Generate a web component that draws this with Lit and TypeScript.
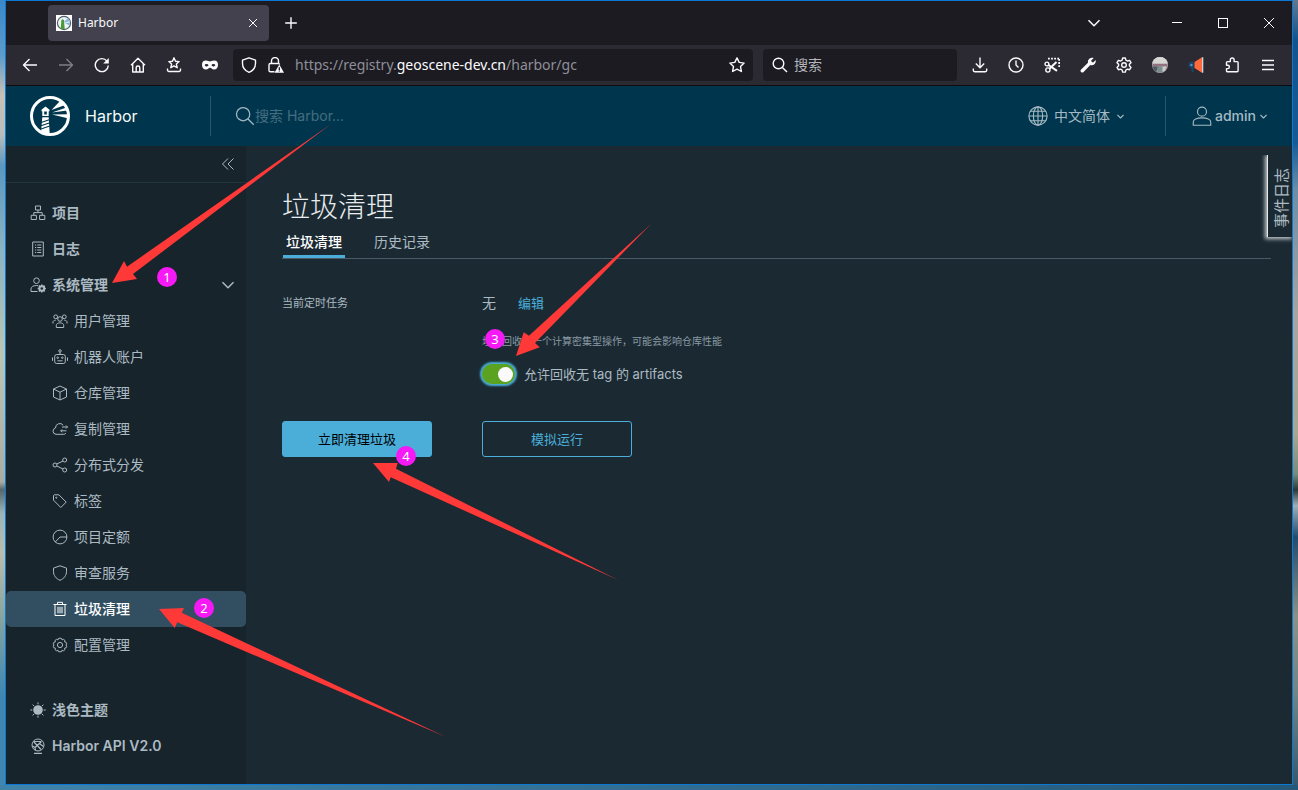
import { LitElement, html, css, svg, TemplateResult } from "lit";
import { customElement, property, state } from "lit/decorators.js";
import { classMap } from "lit/directives/class-map.js";

/* ---------- icon set ---------- */

const paths: Record<string, TemplateResult> = {
  back: svg`<path d="M15 8H1.5M7.5 2 1.5 8l6 6"/>`,
  forward: svg`<path d="M1 8h13.5M8.5 2l6 6-6 6"/>`,
  reload: svg`<path d="M14.3 8.5A6.5 6.5 0 1 1 13 4.2"/><path d="M14.8 1v5.600H9.200z" fill="currentColor" stroke="none"/>`,
  home: svg`<path d="M1 8.2 8 1.2l7 7M2.7 7v8h10.6V7M6.2 15v-4.2a1.8 1.8 0 0 1 3.6 0V15"/>`,
  starTray: svg`<path d="M8 .8l1.5 3.4 3.6.4-2.7 2.5.8 3.6L8 8.9l-3.2 1.8.8-3.6-2.7-2.5 3.6-.4zM1.5 11.5v1.6a1.4 1.4 0 0 0 1.4 1.4h10.2a1.4 1.4 0 0 0 1.4-1.4v-1.6"/>`,
  mask: svg`<path fill="currentColor" stroke="none" fill-rule="evenodd" d="M4 3.6c1.800 0 3 .8 4 .8s2.200-.8 4-.8c2.800 0 4 1.500 4 4.200 0 2.900-1.500 4.700-4 4.700-2.100 0-2.900-1.700-4-1.700s-1.900 1.700-4 1.700c-2.500 0-4-1.800-4-4.700C0 5.100 1.200 3.600 4 3.600zM2.600 8.200c.6.900 1.300 1.200 2.100 1.200s1.500-.4 1.900-1.100c-.5-.9-1.100-1.300-2-1.300s-1.600.5-2 1.200zm6.800.1c.4.700 1.100 1.100 1.900 1.100s1.500-.3 2.100-1.200c-.4-.7-1.100-1.200-2-1.200s-1.500.4-2 1.300z"/>`,
  shield: svg`<path d="M8 .8l6.500 2.300v3.400c0 4-2.500 7.200-6.500 8.800C4 13.700 1.500 10.500 1.500 6.500V3.100z"/>`,
  lock: svg`<path d="M3.500 6.500V4a3.500 3.500 0 0 1 7 0v2.500M6.500 14.800H2.400A1.400 1.400 0 0 1 1 13.400V7.900a1.400 1.400 0 0 1 1.400-1.400h8a1.400 1.400 0 0 1 1.300 1"/><path d="M11.300 7.600 16 15.700H6.500z" fill="currentColor" stroke="none"/><path d="M11.300 10.300v2.600M11.300 13.600v1" stroke="#1c1b22" stroke-width="1.300"/>`,
  star: svg`<path d="M8 .9l2.200 4.500 4.900.7-3.600 3.500.9 4.900L8 12.200l-4.400 2.300.9-4.900L.9 6.100l4.900-.7z"/>`,
  search: svg`<circle cx="6.500" cy="6.500" r="5.300"/><path d="M10.400 10.400 15 15"/>`,
  download: svg`<path d="M8 .5v10M3.800 6.500 8 10.700l4.200-4.200M1.300 11.500v1.800a1.400 1.400 0 0 0 1.400 1.400h10.600a1.400 1.400 0 0 0 1.400-1.400v-1.800"/>`,
  history: svg`<circle cx="8" cy="8" r="7"/><path d="M8 3.500V8l2.500 2.500"/>`,
  scissors: svg`<path d="M4 1.700h12M15.200 2v9" stroke-width="1.800" stroke-dasharray="1.800 1.300"/><circle cx="2.900" cy="7" r="1.900"/><circle cx="3.900" cy="13" r="2.100"/><path d="M4.500 8 13 13.800M5.700 11.500 12.500 5" stroke-width="2"/>`,
  wrench: svg`<path fill="currentColor" stroke="none" d="M10.900.9c1-.3 2-.2 2.800.1l-2.500 2.500.5 1.400 1.500.5 2.400-2.400c.4 1.500 0 3-1 4-1.200 1.200-2.800 1.500-4.300 1L3.600 14.900a1.700 1.700 0 0 1-2.500-2.500L8 5.700C7.500 3.700 8.700 1.500 10.900.9z"/>`,
  gear: svg`<path d="M8 .9l1.300.1.600 2.100 1.500.9 2.200-.6 1.400 2.300-1.600 1.600v1.500l1.600 1.600-1.400 2.300-2.200-.6-1.500.9-.6 2.100H6.700l-.6-2.100-1.500-.9-2.200.6L1 10.400l1.600-1.600V7.300L1 5.700l1.400-2.300 2.200.6 1.500-.9L6.700 1z"/><circle cx="8" cy="8" r="2.300"/>`,
  avatar: svg`<g stroke="none"><circle cx="8" cy="8" r="8" fill="#a9a3a6"/><path d="M.8 4.500A8 8 0 0 1 15.200 4.500L15.800 6.500H.2z" fill="#d8d6d4"/><path d="M1 7h14v2.500H1z" fill="#93717f"/><path d="M4 9.500h8l-1 6H6z" fill="#778f8d"/><path d="M.5 9.500h5l-1 5.500A8 8 0 0 1 .5 9.500z" fill="#505b66"/><path d="M10.500 9.500h4l-2 4.500-2 .8z" fill="#d3c7cb"/></g>`,
  horn: svg`<g stroke="none"><path d="M6.500 5 14 .3v15.400L6.500 11z" fill="#ff6a3d"/><path d="M14 .3h1.300v15.400H14z" fill="#c9d3e0"/><path d="M3 4.600h3v6.800h-.5l.4 3.800H3.900l-.9-4A3.400 3.400 0 0 1 3 4.600z" fill="#1c4266"/><path d="M.6 6.500 3 5v6L.6 9.500z" fill="#1c4266"/><circle cx="3.400" cy="8" r="1.200" fill="#6595b5"/></g>`,
  puzzle: svg`<path d="M2.500 8.200V5.600a1 1 0 0 1 1-1h2.800V2.900a1.900 1.900 0 0 1 3.800 0v1.700h3a1 1 0 0 1 1 1v8.200a1 1 0 0 1-1 1H3.500a1 1 0 0 1-1-1v-2.200h1.200a1.700 1.700 0 0 0 0-3.400z"/>`,
  menu: svg`<path d="M2 3.500h12M2 8h12M2 12.500h12"/>`,
  plus: svg`<path d="M8 2.200v11.600M2.200 8h11.600" stroke-width="1.400"/>`,
  close: svg`<path d="M4 4l8 8M12 4l-8 8"/>`,
  winClose: svg`<path d="M3 3l10 10M13 3 3 13"/>`,
  winMin: svg`<path d="M3 7.500h10"/>`,
  winMax: svg`<path d="M3.500 3.500h9v9h-9z"/>`,
  chevron: svg`<path d="M2.500 5.200 8 10.700l5.500-5.500" stroke-width="var(--chevron-stroke, 1.5)"/>`,
  collapse: svg`<path d="M8 2.500 2.500 8 8 13.500M13.500 2.500 8 8l5.500 5.500"/>`,
  globe: svg`<circle cx="8" cy="8" r="7.300"/><ellipse cx="8" cy="8" rx="3.700" ry="7.300"/><path d="M8 .7v14.600M.7 8h14.600M1.800 4.200h12.400M1.800 11.800h12.400"/>`,
  user: svg`<circle cx="8" cy="4.500" r="3.600"/><path d="M1 15.400v-2.500c0-2 3-3.400 7-3.400s7 1.400 7 3.400v2.500z"/>`,
  org: svg`<path d="M5.500 1h5v4h-5zM1.200 10.300h5.200v4.200H1.200zM9.600 10.300h5.200v4.200H9.600zM8 5v2.600M3.800 10.300V7.600h8.400v2.700"/>`,
  list: svg`<path d="M2.700 1h10.600v14H2.700z"/><path d="M5 4h1.200M7.300 4h4M5 6.500h1.200M7.300 6.500h4M5 9h1.200M7.300 9h4M5 11.500h1.200M7.300 11.500h4" stroke-width="1.200"/>`,
  admin: svg`<circle cx="6.500" cy="3.700" r="2.800"/><path d="M7.500 14.500H1v-2.600c0-2 2.200-3.400 5.500-3.400.6 0 1.100 0 1.600.1"/><circle cx="11.800" cy="11.500" r="2.300" stroke-width="2"/><path d="M11.800 7.400v1.800M11.800 13.800v1.800M7.700 11.500h1.800M14.100 11.500h1.800M8.900 8.600l1.300 1.300M13.400 13.100l1.300 1.300M14.700 8.600l-1.300 1.300M10.200 13.100l-1.300 1.300" stroke-width="1.500"/>`,
  users: svg`<circle cx="8" cy="6" r="2.300"/><circle cx="3.700" cy="3.800" r="1.900"/><circle cx="12.300" cy="3.800" r="1.900"/><path d="M4.300 14.500v-2.200c0-1.500 1.500-2.400 3.700-2.400s3.700.9 3.700 2.400v2.200zM1 10.500V9c0-1 .9-1.700 2.700-1.800M15 10.500V9c0-1-.9-1.700-2.700-1.800"/>`,
  robot: svg`<rect x="2.700" y="5.500" width="10.600" height="9" rx="2"/><path d="M8 5.500V3M.5 8.500v3.300M15.500 8.500v3.300M5.500 11.800h5"/><circle cx="8" cy="1.900" r="1.200"/><circle cx="5.700" cy="8.700" r=".8"/><circle cx="10.300" cy="8.700" r=".8"/>`,
  cube: svg`<path d="M8 1l6.500 3v8L8 15l-6.500-3V4zM1.500 4 8 7.200 14.500 4M8 7.200V15"/>`,
  cloud: svg`<path d="M13.800 12.300c-.5.700-1.200 1-2 1H4a3.200 3.200 0 0 1-.5-6.300 4.300 4.300 0 0 1 7.700-2.800M10 6h5.500M14 4.500 15.500 6 14 7.500M14.500 9.800H8.700M10.200 8.300 8.700 9.800l1.500 1.500"/>`,
  share: svg`<circle cx="3" cy="8" r="2"/><circle cx="12.700" cy="3" r="2"/><circle cx="12.700" cy="13" r="2"/><path d="M4.800 7 11 4M4.800 9l6.200 3"/>`,
  tag: svg`<path d="M1.500 2.500v4.700l7.300 7.300 5.400-5.400L6.900 1.800H2.200z"/><circle cx="4.300" cy="4.700" r=".6"/>`,
  quota: svg`<circle cx="8" cy="8" r="6.900"/><path d="M3.300 13 8 8h6.900"/>`,
  trash: svg`<path d="M1.500 3.500h13M5.500 3.500V1.300h5v2.200M3 3.500v11h10v-11M6 5.800v6.500M8 5.800v6.500M10 5.800v6.500"/>`,
  cog: svg`<circle cx="8" cy="8" r="2.600"/><path d="M8 1.200l1.500.2.500 1.500 1.500-.6 1.400 1.100-.3 1.500 1.500.4.700 1.600-1 1.100 1 1.200-.7 1.600-1.500.4.300 1.500-1.400 1.100-1.500-.6-.5 1.500-1.500.1-1.500-.1-.5-1.500-1.500.6-1.400-1.100.3-1.500-1.500-.4-.7-1.600 1-1.200-1-1.100.7-1.600 1.500-.4-.3-1.500 1.400-1.100 1.500.6.5-1.500z"/>`,
  sun: svg`<circle cx="8" cy="8" r="4.800" fill="currentColor" stroke="none"/><path d="M8 .3v2M8 13.700v2M.3 8h2M13.700 8h2M2.600 2.600 4 4M12 12l1.400 1.400M13.400 2.600 12 4M4 12l-1.400 1.400"/>`,
  api: svg`<circle cx="8" cy="7" r="6"/><path d="M4 15.300h8M3.500 3.500 11 11.500M5 9.500l6.500-6M5 9.500 2.300 8M9.300 5.500 13.500 8.500M4.500 3.500h7M5 9.500l.5 3" stroke-width="1.200"/>`,
};

const icon = (name: string, cls = "") => html`
  <svg class="icon ${cls}" viewBox="0 0 16 16" fill="none" stroke="currentColor" aria-hidden="true">${paths[name]}</svg>
`;

const shared = css`
  * { box-sizing: border-box; }
  .icon { width: 16px; height: 16px; flex: none; display: block; stroke-linejoin: round; }
  button, input { font: inherit; color: inherit; background: none; border: 0; margin: 0; padding: 0; }
  button { cursor: pointer; }
  a { color: inherit; text-decoration: none; }
`;

/* ---------- browser chrome ---------- */

@customElement("browser-chrome")
class BrowserChrome extends LitElement {
  static styles = [shared, css`
    :host { display: block; color: #fbfbfe; font: 13px/20px "Noto Sans", "Noto Sans CJK SC", sans-serif; }
    .tabs { display: flex; align-items: center; height: 44px; background: #1c1b22; padding-left: 42px; }
    .tab { display: flex; align-items: center; gap: 6px; width: 221px; height: 36px; padding: 0 8px; border-radius: 4px; background: #42414d; }
    .favicon { width: 16px; height: 16px; }
    .tab-title { flex: 1; font-size: 12px; }
    .box { display: grid; place-items: center; height: 36px; width: 36px; flex: none; }
    .tab .box { width: 16px; }
    .add { margin-left: 4px; }
    .spacer { flex: 1; }
    .list { margin-right: 42px; }
    .win { width: 46px; }
    .crisp { shape-rendering: crispEdges; }
    .bar { display: flex; align-items: center; height: 41px; padding: 0 6px; background: #2b2a33; border-bottom: 1px solid #0c0c0d; }
    .bar .icon { stroke-width: 1.4; }
    .dim { opacity: .4; }
    .field { display: flex; align-items: center; height: 32px; border-radius: 4px; background: #1c1b22; }
    .url { flex: 1; min-width: 0; margin: 0 10px 0 5px; padding: 0 8px; gap: 11px; }
    .address { flex: 1; font-size: 14px; color: #8f8f98; white-space: nowrap; overflow: hidden; }
    .domain { color: #fbfbfe; }
    .search { width: 194px; margin-right: 5px; padding: 0 9px; gap: 6px; }
    .search input { flex: 1; min-width: 0; outline: 0; font-size: 14px; }
    .search input::placeholder { color: #b4b4ba; opacity: 1; }
  `];

  render() {
    const left = [["back", "后退"], ["forward", "前进"], ["reload", "刷新"], ["home", "主页"], ["starTray", "书签"], ["mask", "隐私"]];
    const right = [["download", "下载"], ["history", "历史"], ["scissors", "截图"], ["wrench", "工具"], ["gear", "设置"], ["avatar", "账户"], ["horn", "通知"], ["puzzle", "扩展"], ["menu", "菜单"]];
    return html`
      <div class="tabs">
        <div class="tab">
          <svg class="favicon" viewBox="0 0 16 16" aria-hidden="true">
            <rect width="16" height="16" fill="#fff"/>
            <circle cx="8" cy="8" r="6.600" fill="#eef4f8" stroke="#55626a" stroke-width="1.200"/>
            <path d="M8.500 6.500 12 3l2 3-5 1.500zM9 8l5-.5-.5 3z" fill="#86b5de"/>
            <path d="M5.200 5.500 6.700 4l1.500 1.500v2.200L8.700 14H4.700l.5-6.300z" fill="#479a35"/>
          </svg>
          <span class="tab-title">Harbor</span>
          <button class="box" aria-label="关闭标签页">${icon("close")}</button>
        </div>
        <button class="box add" aria-label="新标签页">${icon("plus")}</button>
        <span class="spacer"></span>
        <button class="box list" aria-label="所有标签页">${icon("chevron")}</button>
        <button class="box win" aria-label="最小化">${icon("winMin", "crisp")}</button>
        <button class="box win" aria-label="最大化">${icon("winMax", "crisp")}</button>
        <button class="box win" aria-label="关闭">${icon("winClose")}</button>
      </div>
      <div class="bar">
        ${left.map(([n, l]) => html`<button class="box ${classMap({ dim: n === "forward" })}" aria-label=${l}>${icon(n)}</button>`)}
        <div class="field url">
          ${icon("shield")}${icon("lock")}
          <div class="address" role="textbox" aria-label="网址">https://registry.<span class="domain">geoscene-dev.cn</span>/harbor/gc</div>
          ${icon("star")}
        </div>
        <label class="field search">${icon("search")}<input type="text" placeholder="搜索" aria-label="搜索" /></label>
        ${right.map(([n, l]) => html`<button class="box" aria-label=${l}>${icon(n)}</button>`)}
      </div>
    `;
  }
}

/* ---------- application header ---------- */

@customElement("harbor-header")
class HarborHeader extends LitElement {
  static styles = [shared, css`
    :host { display: flex; align-items: center; height: 60px; padding: 0 24px; background: #00364d; color: #a5bac4; font: 14px/20px Inter, "Noto Sans CJK SC", sans-serif; --chevron-stroke: 2; }
    .brand { display: flex; align-items: center; gap: 15px; width: 180px; color: #fafafa; font-size: 16px; }
    .logo { width: 40px; height: 40px; flex: none; }
    .rule { width: 1px; height: 40px; background: #2a566a; }
    .search { display: flex; align-items: center; flex: 1; padding-left: 24px; }
    .search .icon { width: 20px; height: 20px; stroke-width: 1; }
    .search input { flex: 1; min-width: 0; outline: 0; }
    .search input::placeholder { color: #456d80; opacity: 1; }
    .menu { display: flex; align-items: center; }
    .lang { gap: 6px; margin-right: 40px; }
    .account { gap: 3px; margin-left: 26px; font-weight: 500; }
    .big { width: 20px; height: 20px; stroke-width: .9; }
    .small { width: 9px; height: 9px; }
  `];

  render() {
    return html`
      <a class="brand" href="#">
        <svg class="logo" viewBox="0 0 40 40" aria-hidden="true">
          <circle cx="20" cy="20" r="18.500" fill="none" stroke="#fff" stroke-width="3"/>
          <path d="M21.500 14 30 5l5 4zM22 16.500l14.500-5 .8 3zM22 18.500l16-.3-.3 4z" fill="#fff"/>
          <path fill="#fff" fill-rule="evenodd" d="M15.500 10.500l4 3.300v1.500h-.8v4.700h-6.400v-4.700h-.8v-1.500zM14.200 15.500v3h2.600v-3zM12.300 21.200h6.400l1 17-8.700-2z"/>
          <path d="M11 26.500l9-3M11 29.700l9-3M11 33l9.500-3.200" stroke="#00364d" stroke-width="1.100"/>
        </svg>
        <span>Harbor</span>
      </a>
      <span class="rule"></span>
      <label class="search">${icon("search")}<input type="text" placeholder="搜索 Harbor..." aria-label="搜索 Harbor" /></label>
      <button class="menu lang">${icon("globe", "big")}<span>中文简体</span>${icon("chevron", "small")}</button>
      <span class="rule"></span>
      <button class="menu account">${icon("user", "big")}<span>admin</span>${icon("chevron", "small")}</button>
    `;
  }
}

/* ---------- side navigation ---------- */

@customElement("harbor-nav")
class HarborNav extends LitElement {
  @property() active = "垃圾清理";

  static styles = [shared, css`
    :host { display: flex; flex-direction: column; width: 240px; flex: none; padding-bottom: 20px; background: #17242b; color: #acbac3; font: 14px/20px Inter, "Noto Sans CJK SC", sans-serif; }
    .top { display: flex; align-items: center; justify-content: flex-end; height: 37px; padding-right: 10px; border-bottom: 1px solid #22343c; }
    .main { display: flex; flex-direction: column; padding-top: 12px; }
    .foot { display: flex; flex-direction: column; margin-top: auto; }
    .item { display: flex; align-items: center; gap: 6px; height: 36px; padding: 0 10px 0 24px; border-radius: 5px; font-weight: 600; }
    .sub { padding-left: 46px; font-weight: 400; }
    .label { flex: 1; }
    .active { background: #324f62; color: #fff; font-weight: 500; }
  `];

  row(name: string, label: string, sub = false, end: unknown = "") {
    return html`<a href="#" class="item ${classMap({ sub, active: label === this.active })}">${icon(name)}<span class="label">${label}</span>${end}</a>`;
  }

  render() {
    const children = [
      ["users", "用户管理"], ["robot", "机器人账户"], ["cube", "仓库管理"], ["cloud", "复制管理"], ["share", "分布式分发"],
      ["tag", "标签"], ["quota", "项目定额"], ["shield", "审查服务"], ["trash", "垃圾清理"], ["cog", "配置管理"],
    ];
    return html`
      <div class="top"><button aria-label="收起">${icon("collapse")}</button></div>
      <nav class="main">
        ${this.row("org", "项目")} ${this.row("list", "日志")}
        ${this.row("admin", "系统管理", false, icon("chevron"))}
        ${children.map(([n, l]) => this.row(n, l, true))}
      </nav>
      <div class="foot">${this.row("sun", "浅色主题")} ${this.row("api", "Harbor API V2.0")}</div>
    `;
  }
}

/* ---------- garbage collection page ---------- */

@customElement("gc-page")
class GcPage extends LitElement {
  @state() private untagged = true;

  static styles = [shared, css`
    :host { display: block; flex: 1; min-width: 0; padding: 43px 21px 0 36px; background: #1b2a32; color: #acbac3; font: 14px/20px Inter, "Noto Sans CJK SC", sans-serif; }
    h1 { margin: 0; font-size: 28px; line-height: 36px; font-weight: 300; color: #eaedf0; }
    .tabs { display: flex; gap: 25px; height: 34px; border-bottom: 1px solid #495a67; }
    .tab { padding: 4px 3px 0; height: 33px; margin-left: 1px; border-bottom: 3px solid transparent; }
    .on { color: #fff; font-weight: 500; border-bottom-color: #4aaed9; }
    .row { display: grid; grid-template-columns: 200px 1fr; }
    .schedule { padding-top: 34px; align-items: center; }
    .key { font-size: 11px; }
    .value { display: flex; align-items: center; gap: 22px; }
    .link { font-size: 13px; color: #4aaed9; }
    .body { grid-column: 2; }
    .note { margin: 18px 0 0; font-size: 10px; color: #8b9ba5; }
    .switch { display: flex; align-items: center; gap: 9px; margin-top: 13px; font-size: 13px; }
    .switch input { appearance: none; display: flex; align-items: center; justify-content: flex-end; width: 33px; height: 20px; padding: 0 2px; border-radius: 10px; background: #5aa220; box-shadow: 0 0 2px 2px #4aaed9; cursor: pointer; }
    .switch input:not(:checked) { justify-content: flex-start; background: #556672; }
    .switch input::before { content: ""; width: 15px; height: 15px; border-radius: 50%; background: #fafafa; }
    .actions { display: flex; gap: 50px; margin-top: 37px; }
    .btn { width: 150px; height: 36px; border: 1px solid #4aaed9; border-radius: 3px; font-size: 13px; color: #4aaed9; }
    .primary { background: #4aaed9; color: #000; }
  `];

  render() {
    return html`
      <h1>垃圾清理</h1>
      <div class="tabs" role="tablist">
        <button class="tab on" role="tab">垃圾清理</button>
        <button class="tab" role="tab">历史记录</button>
      </div>
      <div class="row schedule">
        <span class="key">当前定时任务</span>
        <div class="value"><span>无</span><button class="link">编辑</button></div>
      </div>
      <div class="row">
        <div class="body">
          <p class="note">垃圾回收是一个计算密集型操作，可能会影响仓库性能</p>
          <label class="switch">
            <input type="checkbox" .checked=${this.untagged} @change=${() => (this.untagged = !this.untagged)} />
            <span>允许回收无 tag 的 artifacts</span>
          </label>
        </div>
      </div>
      <div class="actions">
        <button class="btn primary">立即清理垃圾</button>
        <button class="btn">模拟运行</button>
      </div>
    `;
  }
}

/* ---------- desktop, window and the marked steps ---------- */

@customElement("app-root")
class AppRoot extends LitElement {
  static styles = [shared, css`
    :host {
      display: flex; position: relative; min-height: 100vh; padding: 0 5px 5px; box-sizing: border-box;
      background:
        linear-gradient(90deg, #3f83ab, #245878) bottom / 100% 5px no-repeat,
        linear-gradient(#3a87c8, #5e9bcb 7%, #c9c1b3 12%, #b9bdbb 17%, #5d97bd 21%, #8db4c2 32%, #b9c6b4 45%, #a9aca3 61%, #55686d 62%, #9ab6ba 65%, #b8bdae 70%, #87a5a0 78%, #3f87b0 88%) left / 50% 100% no-repeat,
        linear-gradient(#62798f, #14548b 5%, #175a94 18%, #6d8ea6 24%, #a9a49f 40%, #a8a590 55%, #768d7b 60%, #2b3a36 62%, #9fafb5 64%, #234c6c 68%, #8b9285 78%, #6e8587 88%, #34566b) right / 50% 100% no-repeat;
    }
    .window { display: flex; flex-direction: column; flex: 1; min-width: 0; border: 1px solid #0a78d4; background: #1b2a32; }
    .work { display: flex; flex: 1; position: relative; }
    .events { position: absolute; top: 9px; right: 0; width: 25px; height: 82px; padding: 4px 0 0 2px; display: grid; place-items: center; border-left: 1px solid #e4e8ea; background: #1b2a32; box-shadow: -1px 1px 4px 1px #c3cacd; clip-path: inset(0 0 -8px -8px); color: #acbac3; font: 15px/20px "Noto Sans CJK SC", sans-serif; }
    .events span { writing-mode: vertical-rl; text-orientation: sideways; transform: rotate(180deg); }
    .marks { position: absolute; left: 0; top: 0; width: 660px; height: 750px; pointer-events: none; }
    .arrows { display: block; width: 660px; height: 750px; fill: #ff3838; }
    .step { position: absolute; width: 20px; height: 20px; border-radius: 50%; background: #f51af5; color: #fff; text-align: center; font: 13px/20px "Noto Sans", sans-serif; }
    .s1 { left: 157px; top: 267px; }
    .s2 { left: 194px; top: 598px; }
    .s3 { left: 485px; top: 329px; }
    .s4 { left: 396px; top: 446px; }
  `];

  render() {
    return html`
      <div class="window">
        <browser-chrome></browser-chrome>
        <harbor-header></harbor-header>
        <div class="work">
          <harbor-nav></harbor-nav>
          <gc-page></gc-page>
          <button class="events"><span>事件日志</span></button>
        </div>
      </div>
      <div class="marks">
        <svg class="arrows" viewBox="0 0 660 750" aria-hidden="true">
          <path d="M112 283l12-22 3 5.700L331 124 133 274l4 5z"/>
          <path d="M159 609l25-1-2.300 4.700L446 737 177.300 622.300 174.700 628z"/>
          <path d="M516 356l7.700-23.700 5.300 3.400L651 224 535 343l4.700 4.300z"/>
          <path d="M373 463h24.700L396 468.700 618 580 390.700 477.300 389 482z"/>
        </svg>
        ${[1, 2, 3, 4].map((n) => html`<span class="step s${n}">${n}</span>`)}
      </div>
    `;
  }
}
